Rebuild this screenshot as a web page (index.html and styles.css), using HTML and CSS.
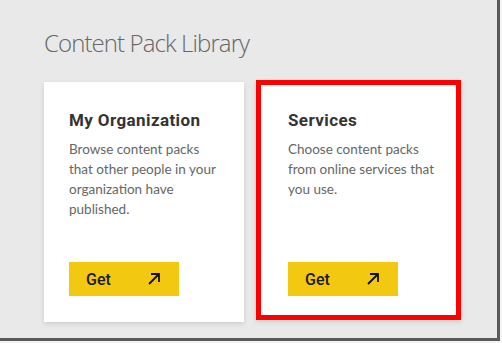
FILE: index.html
```html
<!DOCTYPE html>
<html lang="en">
<head>
    <meta charset="UTF-8">
    <meta name="viewport" content="width=device-width, initial-scale=1.0">
    <title>Content Pack Library</title>
    <link rel="stylesheet" href="styles.css">
</head>
<body>
    <div class="frame">
        <h1 class="page-title">Content Pack Library</h1>

        <div class="cards">
            <div class="card">
                <h2 class="card-title">My Organization</h2>
                <p class="card-text">Browse content packs that other people in your organization have published.</p>
                <button class="btn-get">
                    <span>Get</span>
                    <svg class="arrow" width="14" height="14" viewBox="0 0 14 14">
                        <path d="M2 12 L12 2 M4 2 H12 V10" fill="none" stroke="#111" stroke-width="1.8"/>
                    </svg>
                </button>
            </div>

            <div class="card card-highlight">
                <h2 class="card-title">Services</h2>
                <p class="card-text">Choose content packs from online services that you use.</p>
                <button class="btn-get">
                    <span>Get</span>
                    <svg class="arrow" width="14" height="14" viewBox="0 0 14 14">
                        <path d="M2 12 L12 2 M4 2 H12 V10" fill="none" stroke="#111" stroke-width="1.8"/>
                    </svg>
                </button>
            </div>
        </div>
    </div>
</body>
</html>
```

FILE: styles.css
```css
* { margin: 0; padding: 0; box-sizing: border-box; }
body {
    background: #f4f4f4;
    font-family: Lato, "Open Sans", Arial, sans-serif;
}
.frame {
    width: 500px;
    height: 341px;
    background: #e9e9e9;
    border-right: 3px solid #5a5a5a;
    border-bottom: 3px solid #5a5a5a;
    padding: 26px 0 0 44px;
}
.page-title {
    font-family: "Open Sans", Arial, sans-serif;
    font-weight: 300;
    font-size: 24px;
    line-height: 34px;
    letter-spacing: -0.9px;
    color: #666;
}
.cards {
    display: flex;
    align-items: flex-start;
    gap: 12px;
    margin-top: 22px;
}
.card {
    width: 200px;
    height: 240px;
    background: white;
    box-shadow: 0 2px 5px rgba(0,0,0,0.12);
    padding: 27px 18px 0 25px;
    display: flex;
    flex-direction: column;
}
.card-highlight {
    width: 205px;
    margin-top: -2px;
    height: 240px;
    border: 5px solid #ff0000;
    padding: 24px 12px 0 27px;
}
.card-title {
    font-family: Roboto, Arial, sans-serif;
    font-weight: 700;
    font-size: 17px;
    line-height: 22px;
    color: #333;
    letter-spacing: 0.4px;
}
.card-text {
    margin-top: 8px;
    font-size: 13.5px;
    line-height: 20px;
    color: #666;
}
.btn-get {
    margin-top: auto;
    margin-bottom: 26px;
    width: 110px;
    height: 34px;
    background: #f2c811;
    border: none;
    display: flex;
    align-items: center;
    justify-content: space-between;
    padding: 0 18px 0 17px;
    font-family: Roboto, Arial, sans-serif;
    font-size: 16px;
    font-weight: 500;
    color: #1a1a1a;
    cursor: pointer;
}
.card-highlight .btn-get { margin-bottom: 19px; }
```
